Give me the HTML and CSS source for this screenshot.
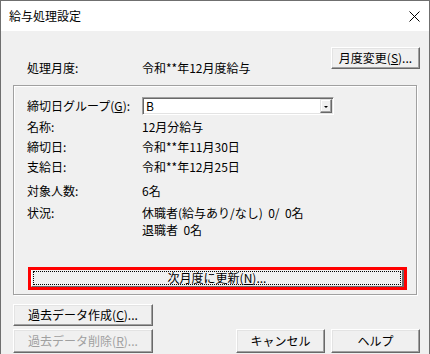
FILE: index.html
```html
<!DOCTYPE html>
<html lang="ja">
<head>
    <meta charset="UTF-8">
    <title>給与処理設定</title>
    <link rel="stylesheet" href="styles.css">
</head>
<body>
    <div class="window">
        <div class="titlebar">
            <span class="title">給与処理設定</span>
            <svg class="close" width="11" height="11" viewBox="0 0 11 11">
                <path d="M0.5 0.5 L10.5 10.5 M10.5 0.5 L0.5 10.5" stroke="#000" stroke-width="1" fill="none"/>
            </svg>
        </div>
        <div class="client">
            <div class="head">
                <div class="row head-info">
                    <span class="label">処理月度:</span>
                    <span class="value">令和**年12月度給与</span>
                </div>
                <button class="btn btn-small">月度変更(<u>S</u>)...</button>
            </div>

            <div class="group">
                <div class="row row-combo">
                    <span class="label">締切日グループ(<u>G</u>):</span>
                    <div class="combo">
                        <span class="combo-text">B</span>
                        <span class="combo-arrow"><i class="tri"></i></span>
                    </div>
                </div>
                <div class="row gap4">
                    <span class="label">名称:</span>
                    <span class="value">12月分給与</span>
                </div>
                <div class="row gap4">
                    <span class="label">締切日:</span>
                    <span class="value">令和**年11月30日</span>
                </div>
                <div class="row gap4">
                    <span class="label">支給日:</span>
                    <span class="value">令和**年12月25日</span>
                </div>
                <div class="row gap8">
                    <span class="label">対象人数:</span>
                    <span class="value">6名</span>
                </div>
                <div class="row row-status">
                    <span class="label">状況:</span>
                    <span class="value">休職者(給与あり/なし)&nbsp; 0/&nbsp; 0名<br>退職者&nbsp; 0名</span>
                </div>
                <!-- highlighted button -->
                <div class="mark">
                    <button class="next-btn"><span class="focus">次月度に更新(<u>N</u>)...</span></button>
                </div>
            </div>

            <button class="btn btn-wide first">過去データ作成(<u>C</u>)...</button>
            <div class="bottom-row">
                <button class="btn btn-wide" disabled>過去データ削除(<u>R</u>)...</button>
                <button class="btn btn-small push">キャンセル</button>
                <button class="btn btn-small">ヘルプ</button>
            </div>
        </div>
    </div>
</body>
</html>
```
FILE: styles.css
```css
html, body {
    margin: 0;
    height: 100%;
    overflow: hidden;
    background: #f0f0f0;
    font-family: "Noto Sans CJK JP", "Noto Sans", sans-serif;
    font-size: 12px;
    color: #000;
}
.window {
    box-sizing: border-box;
    width: 430px;
    height: 360px;
    border: 1px solid #6f6f6f;
    border-bottom: none;
    display: flex;
    flex-direction: column;
    overflow: hidden;
}
.titlebar {
    height: 30px;
    background: #fff;
    display: flex;
    align-items: center;
    padding-left: 8px;
    flex-shrink: 0;
}
.title {
    font-size: 12px;
    line-height: 16px;
}
.close {
    margin-left: auto;
    margin-right: 9px;
}
.client {
    flex: 1;
    background: #f0f0f0;
    padding: 0 9px 0 12px;
}
.head {
    display: flex;
    align-items: flex-start;
    padding-top: 16px;
}
.head-info {
    margin: 13px 0 0 14px;
}
.row {
    display: flex;
    line-height: 16px;
}
.label {
    width: 115px;
    flex-shrink: 0;
}
.btn {
    box-sizing: border-box;
    height: 22px;
    padding: 0;
    font: inherit;
    color: #000;
    background: #f0f0f0;
    border: 1px solid;
    border-color: #fff #696969 #696969 #fff;
    box-shadow: inset -1px -1px 0 #a0a0a0, inset 1px 1px 0 #e3e3e3;
    line-height: 16px;
}
.btn[disabled] {
    color: #a0a0a0;
}
.btn-small {
    width: 89px;
    margin-left: auto;
}
.btn-wide {
    width: 140px;
}
.group {
    box-sizing: border-box;
    width: 404px;
    margin-top: 9px;
    padding: 11px 0 4px 13px;
    border: 1px solid #a0a0a0;
    box-shadow: inset 1px 1px 0 #fff, 1px 1px 0 #fff;
}
.row-combo {
    height: 18px;
    align-items: center;
}
.gap4 { margin-top: 4px; }
.gap8 { margin-top: 8px; }
.row-status {
    margin-top: 5px;
    line-height: 17px;
}
.combo {
    box-sizing: border-box;
    width: 192px;
    height: 18px;
    display: flex;
    align-items: center;
    background: #fff;
    border: 1px solid;
    border-color: #a0a0a0 #fff #fff #a0a0a0;
    box-shadow: inset 1px 1px 0 #696969, inset -1px -1px 0 #e3e3e3;
    padding: 1px 1px 1px 3px;
}
.combo-text {
    flex: 1;
    line-height: 14px;
}
.combo-arrow {
    box-sizing: border-box;
    width: 12px;
    height: 14px;
    display: flex;
    align-items: center;
    justify-content: center;
    background: #f0f0f0;
    border: 1px solid;
    border-color: #e3e3e3 #696969 #696969 #e3e3e3;
    box-shadow: inset -1px -1px 0 #a0a0a0, inset 1px 1px 0 #fff;
}
.tri {
    width: 0;
    height: 0;
    border-left: 2px solid transparent;
    border-right: 2px solid transparent;
    border-top: 2px solid #000;
    margin: 1px 0 0 0;
}
.mark {
    box-sizing: border-box;
    width: 379px;
    height: 23px;
    margin: 29px 0 0 1px;
    border: 3px solid #ff0000;
}
.next-btn {
    box-sizing: border-box;
    display: block;
    width: 100%;
    height: 100%;
    padding: 1px;
    font: inherit;
    color: #000;
    background: #f0f0f0;
    border-style: solid;
    border-width: 0 2px 1px 1px;
    border-color: #fff #696969 #696969 #fff;
}
.focus {
    box-sizing: border-box;
    display: flex;
    align-items: center;
    justify-content: center;
    height: 100%;
    border: 1px dotted #000;
    line-height: 14px;
}
.first {
    display: block;
    margin-top: 9px;
}
.bottom-row {
    display: flex;
    gap: 6px;
    margin-top: 3px;
}
.bottom-row .btn {
    height: 24px;
}
.bottom-row .btn-small {
    margin-left: 0;
}
.bottom-row .push {
    margin-left: auto;
}
```
